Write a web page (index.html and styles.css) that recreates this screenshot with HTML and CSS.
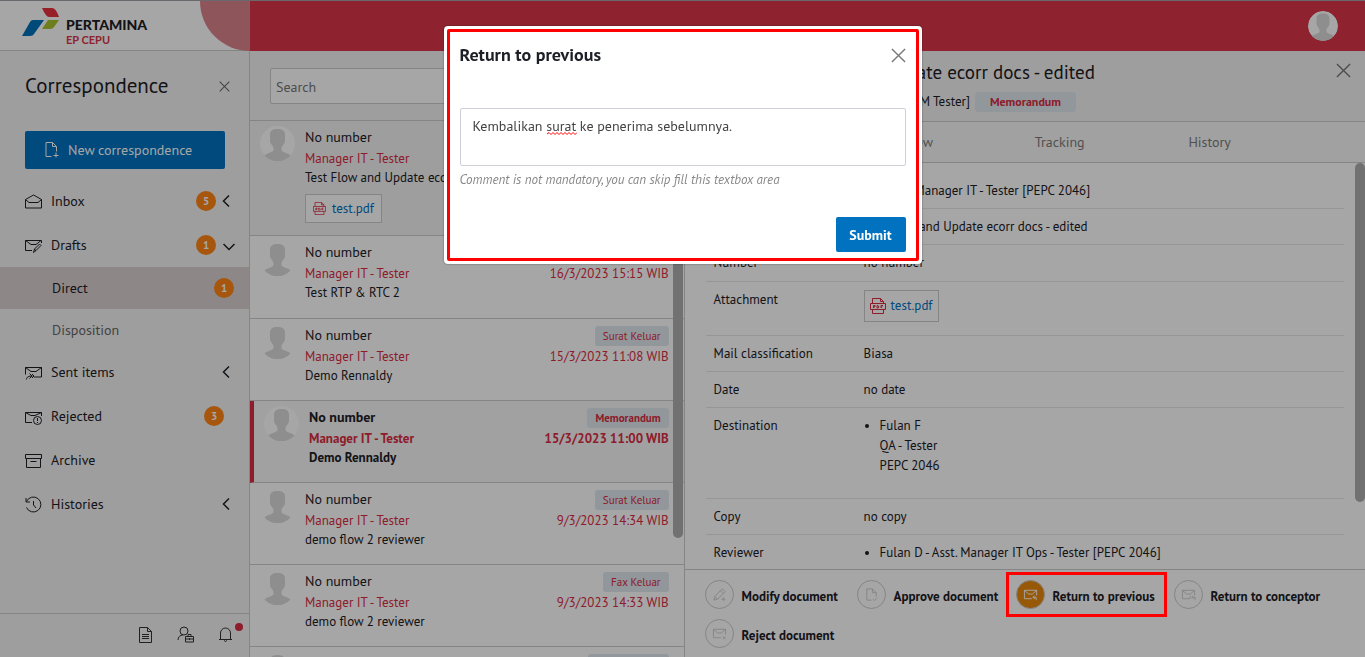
FILE: index.html
```html
<!DOCTYPE html>
<html lang="en">
<head>
<meta charset="utf-8">
<meta name="viewport" content="width=device-width, initial-scale=1">
<title>Correspondence</title>
<link rel="stylesheet" href="styles.css">
</head>
<body>
<svg class="sprite" aria-hidden="true">
  <symbol id="person" viewBox="0 0 35 35"><circle cx="17.500" cy="17.500" r="17.500" fill="#fff"/><path fill="#dadada" d="M17.500 3c5 0 7.500 2 7.500 5.500v6c0 3.500-2.500 4-3.500 7.500v2.500c2 2.500 7 2.500 9 5A17.500 17.500 0 0 1 4.500 29.500c2-2.500 7-2.500 9-5V22C12.500 18.500 10 18 10 14.500v-6C10 5 12.500 3 17.500 3z"/></symbol>
  <symbol id="close" viewBox="0 0 16 16"><path d="M1 1l14 14M15 1L1 15"/></symbol>
  <symbol id="left" viewBox="0 0 8 12"><path d="M7 .5L1.500 6 7 11.500"/></symbol>
  <symbol id="down" viewBox="0 0 12 8"><path d="M.5 1L6 6.500 11.500 1"/></symbol>
  <symbol id="inbox" viewBox="0 0 17 17"><path d="M.5 6.500L8.500 2l8 4.500v8.500H.5zM.5 6.500l3.500 3h9l3.500-3"/></symbol>
  <symbol id="drafts" viewBox="0 0 17 17"><path d="M16.500 6V3.500H.5v10H7M.5 3.500L6 7.500h5L16 3.500M8.500 15.500l1-3.500 5-5 1.500 1.500-5 5zM9.500 12l1.500 2"/></symbol>
  <symbol id="sent" viewBox="0 0 17 17"><path d="M.5 10.500v-7h16v9.500H9M.5 3.500L6 7.500h5L16.500 3.500M1.500 15.500c0-2.500 2-3.500 6-3.500M4.500 9.500L7 12l-2.500 2.500M7 10L9 12l-2 2"/></symbol>
  <symbol id="rejected" viewBox="0 0 17 17"><path d="M7 14.500H.5v-10h16V8M.5 4.500L6 7.500h4L16.500 4.500"/><circle cx="12.500" cy="12.500" r="4"/><path d="M12.500 10v3M12.500 14v1"/></symbol>
  <symbol id="archive" viewBox="0 0 17 17"><path d="M.5 2.500h16v4H.5zM1.500 6.500v9h14v-9M5.500 9.500h6"/></symbol>
  <symbol id="history" viewBox="0 0 17 17"><path d="M1.500 5.500a7.500 7.500 0 1 1 0 6M1 2v4h4M8.500 5v4l2.500 3"/></symbol>
  <symbol id="newdoc" viewBox="0 0 16 18"><path d="M8 15.500H2.500v-14H9l4 4v5M9 1.500v4h4M12.500 11.500v5M10 14.500h5"/></symbol>
  <symbol id="pdf" viewBox="0 0 16 16"><path d="M2.500 5V.5h8l3 3V5M10.500 .5v3h3M.5 5.500h15v6H.5zM2.500 11.500v4h11v-4M3.500 10V7.500h1.500v1.500H3.500M7 7.500v2.500h1l1-1-1-1.500zM11 10V7.500h2M11 9h1.500"/></symbol>
  <symbol id="mail" viewBox="0 0 16 14"><path d="M9.500 11.500H1.500v-9h13V8M1.500 2.500L6 6.500h4l4.500-4"/></symbol>
</svg>

<div class="app">
  <aside class="sidebar">
    <div class="brand">
      <svg class="brand-mark" viewBox="0 0 38 30" aria-hidden="true"><path fill="#e8313d" d="M20 1h10q4 0 7 9H27q-3 0-7-9z"/><path fill="#0072bc" d="M11 13h11L12 27q-1 2-4 2H0l8-14q1-2 3-2z"/><path fill="#a6c32b" d="M26 13h11l-5 7q-1 2-4 2h-8z"/></svg>
      <div class="brand-text"><strong>PERTAMINA</strong><span>EP CEPU</span></div>
      <span class="brand-arc"></span>
    </div>
    <div class="side-title"><h1>Correspondence</h1><button class="icon-button" aria-label="Close menu"><svg class="line x-small"><use href="#close"/></svg></button></div>
    <button class="new-button"><svg class="line new-icon"><use href="#newdoc"/></svg>New correspondence</button>
    <nav class="menu">
      <a href="#"><svg class="line"><use href="#inbox"/></svg><span class="name">Inbox</span><b class="count">5</b><svg class="line left"><use href="#left"/></svg></a>
      <a href="#"><svg class="line"><use href="#drafts"/></svg><span class="name">Drafts</span><b class="count">1</b><svg class="line down"><use href="#down"/></svg></a>
      <a href="#" class="sub current"><span class="name">Direct</span><b class="count">1</b></a>
      <a href="#" class="sub"><span class="name">Disposition</span></a>
      <a href="#"><svg class="line"><use href="#sent"/></svg><span class="name">Sent items</span><svg class="line left"><use href="#left"/></svg></a>
      <a href="#"><svg class="line"><use href="#rejected"/></svg><span class="name">Rejected</span><b class="count end">3</b></a>
      <a href="#"><svg class="line"><use href="#archive"/></svg><span class="name">Archive</span></a>
      <a href="#"><svg class="line"><use href="#history"/></svg><span class="name">Histories</span><svg class="line left"><use href="#left"/></svg></a>
    </nav>
    <div class="side-tools">
      <button class="icon-button" aria-label="Documents"><svg class="line" viewBox="0 0 17 17"><path d="M2.500 1.500h8l4 4v11h-12zM10.500 1.500v4h4M5 8.500h7M5 10.500h7M5 12.500h7"/></svg></button>
      <button class="icon-button" aria-label="Secretary"><svg class="line" viewBox="0 0 17 17"><circle cx="7" cy="5" r="4"/><path d="M1 14c0-3 2-5 5-5M8.500 10.500h8v5.500h-8zM8.500 13h8M11 10.500v-2h3v2M12.500 12v2"/></svg></button>
      <button class="icon-button bell" aria-label="Notifications"><svg class="line" viewBox="0 0 17 17"><path d="M3.500 13V7a5 5 0 0 1 10 0v6M2 13.500h13M7 14.500q1.500 2 3 0"/></svg><i class="dot"></i></button>
    </div>
  </aside>

  <div class="workspace">
    <header class="topbar"><button class="icon-button" aria-label="Account"><svg class="account"><use href="#person"/></svg></button></header>
    <div class="columns">
      <section class="inbox">
        <div class="search"><input type="search" placeholder="Search" aria-label="Search"></div>
        <div class="mails">
          <article class="mail open">
            <svg class="avatar"><use href="#person"/></svg>
            <div class="mail-text"><h2>No number</h2><p class="from">Manager IT - Tester</p><p>Test Flow and Update ecorr docs</p><a href="#" class="file"><svg class="line"><use href="#pdf"/></svg>test.pdf</a></div>
          </article>
          <article class="mail">
            <svg class="avatar"><use href="#person"/></svg>
            <div class="mail-text"><h2>No number</h2><p class="from">Manager IT - Tester</p><p>Test RTP &amp; RTC 2</p></div>
            <div class="mail-side"><span class="tag">Surat Keluar</span><time>16/3/2023 15:15 WIB</time></div>
          </article>
          <article class="mail">
            <svg class="avatar"><use href="#person"/></svg>
            <div class="mail-text"><h2>No number</h2><p class="from">Manager IT - Tester</p><p>Demo Rennaldy</p></div>
            <div class="mail-side"><span class="tag">Surat Keluar</span><time>15/3/2023 11:08 WIB</time></div>
          </article>
          <article class="mail selected">
            <svg class="avatar"><use href="#person"/></svg>
            <div class="mail-text"><h2>No number</h2><p class="from">Manager IT - Tester</p><p>Demo Rennaldy</p></div>
            <div class="mail-side"><span class="tag">Memorandum</span><time>15/3/2023 11:00 WIB</time></div>
          </article>
          <article class="mail">
            <svg class="avatar"><use href="#person"/></svg>
            <div class="mail-text"><h2>No number</h2><p class="from">Manager IT - Tester</p><p>demo flow 2 reviewer</p></div>
            <div class="mail-side"><span class="tag">Surat Keluar</span><time>9/3/2023 14:34 WIB</time></div>
          </article>
          <article class="mail">
            <svg class="avatar"><use href="#person"/></svg>
            <div class="mail-text"><h2>No number</h2><p class="from">Manager IT - Tester</p><p>demo flow 2 reviewer</p></div>
            <div class="mail-side"><span class="tag">Fax Keluar</span><time>9/3/2023 14:33 WIB</time></div>
          </article>
          <article class="mail">
            <svg class="avatar"><use href="#person"/></svg>
            <div class="mail-text"></div>
            <div class="mail-side"><span class="tag">Memorandum</span></div>
          </article>
          <span class="thumb"></span>
        </div>
      </section>

      <main class="detail">
        <div class="detail-head">
          <div><h2>Test Flow and Update ecorr docs - edited</h2>
          <p><span>Fulan F - Manager IT - Tester [PEPM Tester]</span><span class="tag wide">Memorandum</span></p></div>
          <button class="icon-button" aria-label="Close document"><svg class="line x-mid"><use href="#close"/></svg></button>
        </div>
        <nav class="tabs"><a href="#">Detail</a><a href="#">Preview</a><a href="#">Tracking</a><a href="#">History</a></nav>
        <div class="detail-body">
          <table class="facts">
            <tbody>
              <tr><th scope="row">From</th><td>Fulan F - Manager IT - Tester [PEPC 2046]</td></tr>
              <tr><th scope="row">Subject</th><td>Test Flow and Update ecorr docs - edited</td></tr>
              <tr class="number"><th scope="row">Number</th><td>no number</td></tr>
              <tr class="attachment"><th scope="row">Attachment</th><td><a href="#" class="file"><svg class="line"><use href="#pdf"/></svg>test.pdf</a></td></tr>
              <tr><th scope="row">Mail classification</th><td>Biasa</td></tr>
              <tr><th scope="row">Date</th><td>no date</td></tr>
              <tr class="destination"><th scope="row">Destination</th><td><ul><li>Fulan F<br>QA - Tester<br>PEPC 2046</li></ul></td></tr>
              <tr><th scope="row">Copy</th><td>no copy</td></tr>
              <tr><th scope="row">Reviewer</th><td><ul><li>Fulan D - Asst. Manager IT Ops - Tester [PEPC 2046]</li></ul></td></tr>
            </tbody>
          </table>
          <span class="thumb"></span>
        </div>
        <div class="actions">
          <button><span class="ring"><svg class="line" viewBox="0 0 16 16"><path d="M2 14l1-4 8-8 3 3-8 8zM3 10l3 3M9 4l3 3M10 13h4M12.500 11v4"/></svg></span><span class="label">Modify document</span></button>
          <button><span class="ring"><svg class="line" viewBox="0 0 16 16"><path d="M8 14H3V2h6l4 4v4M9 2v4h4M9.500 13l1.500 1.500 3-3"/></svg></span><span class="label">Approve document</span></button>
          <button class="active"><span class="ring"><svg class="line" viewBox="0 0 16 14"><use href="#mail" width="16" height="14"/><path d="M12.500 8.500l-2 1.500 2 1.500M10.500 10h3.500v3"/></svg></span><span class="label">Return to previous</span><i class="marker"></i></button>
          <button><span class="ring"><svg class="line" viewBox="0 0 16 14"><use href="#mail" width="16" height="14"/><path d="M10.500 8.500L9 10l1.500 1.500M13 8.500L11.500 10l1.500 1.500M12 10h3v3"/></svg></span><span class="label">Return to conceptor</span></button>
          <button><span class="ring"><svg class="line" viewBox="0 0 16 14"><use href="#mail" width="16" height="14"/><path d="M11.500 10l3 3M14.500 10l-3 3"/></svg></span><span class="label">Reject document</span></button>
        </div>
      </main>
    </div>
  </div>
</div>

<div class="backdrop">
  <form class="dialog" role="dialog" aria-labelledby="dialog-title">
    <div class="dialog-frame">
      <div class="dialog-head"><h2 id="dialog-title">Return to previous</h2><button type="button" class="icon-button" aria-label="Close dialog"><svg class="line x-mid"><use href="#close"/></svg></button></div>
      <div class="comment">
        <textarea aria-label="Comment" aria-describedby="hint" spellcheck="false">Kembalikan surat ke penerima sebelumnya.</textarea>
        <svg class="squiggle" viewBox="0 0 30 3" aria-hidden="true"><path d="M0 2l2-1.500 2 2 2-2 2 2 2-2 2 2 2-2 2 2 2-2 2 2 2-2 2 2 2-2 2 2 2-2"/></svg>
      </div>
      <p id="hint">Comment is not mandatory, you can skip fill this textbox area</p>
      <button type="submit" class="submit">Submit</button>
    </div>
  </form>
</div>
</body>
</html>
```
FILE: styles.css
```css
* { box-sizing: border-box; }
body { margin: 0; font: 13px/20px "PT Sans", Lato, "Noto Sans", sans-serif; color: #1c2026; background: #fff; overflow: hidden; }
h1, h2, p, ul { margin: 0; font-weight: inherit; }
ul { padding: 0 0 0 16px; }
a { color: inherit; text-decoration: none; }
button, input, textarea { font: inherit; color: inherit; }
button { border: 0; background: none; padding: 0; text-align: left; }
.sprite { position: absolute; width: 0; height: 0; }
.line { width: 17px; height: 17px; fill: none; stroke: currentColor; stroke-width: 1; flex: none; }
.icon-button { display: flex; color: #333; }

.app { display: flex; height: 100vh; border-top: 1px solid #a0a0a8; }

/* Sidebar */
.sidebar { width: 250px; flex: none; display: flex; flex-direction: column; background: #f3f3f3; border-right: 1px solid #ccc; }
.brand { position: relative; height: 50px; padding: 6px 0 0 22px; display: flex; gap: 6px; background: #fff; border-bottom: 1px solid #ccc; }
.brand-mark { width: 38px; height: 30px; }
.brand-text { display: flex; flex-direction: column; padding-top: 10px; font-family: Lato, sans-serif; }
.brand-text strong { font-size: 14px; line-height: 16px; font-weight: 900; }
.brand-text span { font-size: 11px; line-height: 14px; font-weight: 700; color: #da3749; }
.brand-arc { position: absolute; top: 0; right: -1px; width: 50px; height: 50px; background: #db848c; border-bottom-left-radius: 50px; }
.side-title { display: flex; align-items: center; justify-content: space-between; padding: 20px 19px 0 25px; }
.side-title h1 { font-size: 21px; line-height: 30px; }
.side-title .icon-button { color: #666; }
.x-small { width: 11px; height: 11px; stroke-width: 1.5; }
.new-button { display: flex; align-items: center; gap: 8px; height: 38px; margin: 30px 24px 0 25px; padding-left: 18px; background: #0072c0; color: #fff; border-radius: 2px; font-size: 14px; }
.new-icon { width: 17px; height: 18px; }
.menu { flex: 1; padding-top: 10px; font-size: 14px; min-height: 0; }
.menu a { display: flex; align-items: center; height: 44px; padding: 0 19px 0 25px; }
.menu .name { flex: 1; padding-left: 9px; }
.menu .sub { height: 41px; padding: 0 15px 0 43px; }
.menu .sub:not(.current) { color: #666; }
.menu .current { height: 42px; background: #dbd0d0; }
.count { display: grid; place-items: center; width: 20px; height: 20px; border-radius: 10px; background: #ff8414; color: #fff; font-size: 11px; }
.menu .end { margin-right: 6px; }
.menu .left { width: 8px; height: 12px; margin-left: 6px; stroke-width: 1.5; }
.menu .down { width: 12px; height: 8px; margin: 4px -5px 0 7px; stroke-width: 1.5; }
.side-tools { display: flex; align-items: center; justify-content: flex-end; gap: 23px; height: 44px; padding: 0 15px 2px 0; border-top: 1px solid #ccc; }
.bell { position: relative; }
.dot { position: absolute; right: -9px; top: -3px; width: 8px; height: 8px; border-radius: 50%; background: #da2c43; }

/* Top bar */
.workspace { flex: 1; min-width: 0; display: flex; flex-direction: column; }
.topbar { flex: none; display: flex; align-items: center; justify-content: flex-end; height: 50px; padding-right: 27px; background: #da3749; }
.account { width: 30px; height: 30px; border-radius: 50%; }
.columns { flex: 1; min-height: 0; display: flex; }

/* Mail list */
.inbox { flex: 434; min-width: 0; display: flex; flex-direction: column; border-right: 1px solid #ccc; }
.search { padding: 17px 20px 16px; background: #f3f3f3; border-bottom: 1px solid #ccc; }
.search input { display: block; width: 100%; height: 36px; padding: 2px 5px 0; border: 1px solid #ccc; border-radius: 2px; background: #fff; font-size: 14px; outline: 0; }
.search input::placeholder { color: #777; opacity: 1; }
.mails { position: relative; flex: 1; min-height: 0; overflow: hidden; }
.mail { display: flex; min-height: 82px; padding: 5px 15px 5px 10px; border-bottom: 1px solid #ccc; }
.mail.open { background: #f3f3f3; padding-bottom: 12px; }
.mail.open + .mail { min-height: 83px; }
.mail.selected { background: #f8f8f8; border-left: 4px solid #da2c43; font-weight: 700; }
.avatar { flex: none; width: 35px; height: 35px; margin-right: 10px; }
.mail-text { flex: 1; min-width: 0; }
.mail h2 { margin-bottom: 1px; font-size: 14px; line-height: 22px; }
.mail p { line-height: 18px; white-space: nowrap; }
.mail .from, .mail time { line-height: 20px; color: #da2c43; }
.mail-side { display: flex; flex-direction: column; align-items: flex-end; gap: 1px; padding-top: 2px; white-space: nowrap; }
.tag { padding: 0 8px; border-radius: 3px; background: #dfe8ee; color: #da2c43; font-size: 11px; line-height: 20px; }
.file { display: inline-flex; align-items: center; gap: 6px; height: 29px; padding: 0 7px; border: 1px solid #ccc; background: #fff; color: #0072c0; }
.file .line { width: 13px; height: 13px; color: #da2c43; }
.mail .file { margin-top: 7px; }
.thumb { position: absolute; width: 10px; background: #aeaeae; }
.mails .thumb { top: -20px; right: 1px; height: 437px; border-radius: 5px; }

/* Document */
.detail { flex: 681; min-width: 0; display: flex; flex-direction: column; }
.detail-head { display: flex; justify-content: space-between; align-items: flex-start; height: 71px; padding: 8px 14px 0 51px; background: #f3f3f3; border-bottom: 1px solid #ccc; }
.detail-head h2 { padding-left: 32px; font-size: 19px; line-height: 26px; }
.detail-head p { display: flex; align-items: center; gap: 5px; padding-top: 7px; }
.detail-head .icon-button { padding-top: 4px; color: #777; }
.tag.wide { padding: 0 15px; font-size: 12px; font-weight: 700; border-radius: 4px; }
.x-mid { width: 15px; height: 15px; stroke-width: 1.5; }
.tabs { display: flex; height: 41px; background: #f8f8f8; border-bottom: 1px solid #ccc; }
.tabs a { width: 150px; text-align: center; line-height: 40px; font-size: 14px; color: #7c7c7c; }
.detail-body { position: relative; flex: 1; min-height: 0; overflow: hidden; padding: 10px 21px 0; }
.detail-body .thumb { top: 0; right: 0; height: 339px; border-radius: 5px; }
.facts { width: 100%; border-collapse: separate; border-spacing: 0; }
.facts th, .facts td { height: 36px; padding: 8px 8px 7px; border-bottom: 1px solid #e6e6e6; text-align: left; vertical-align: top; font-weight: 400; }
.facts th { width: 150px; }
.facts .number > * { height: 37px; }
.facts .attachment > * { height: 54px; }
.facts .destination > * { height: 91px; }
.facts .file { height: 32px; padding: 0 5px; gap: 5px; }
.facts .file .line { width: 16px; height: 16px; }
.actions { flex: none; display: grid; grid-template-columns: 152px 159px 158px 1fr; gap: 9px 0; height: 88px; align-content: start; padding: 10px 0 0 20px; border-top: 1px solid #ccc; font-weight: 700; }
.actions button { position: relative; justify-self: start; display: flex; align-items: flex-start; gap: 8px; white-space: nowrap; height: 30px; }
.label { padding-top: 7px; }
.ring { display: grid; place-items: center; width: 29px; height: 29px; border: 1px solid #ccc; border-radius: 50%; color: #ccc; }
.ring .line { width: 15px; height: 15px; }
.active .ring { background: #e8890c; color: #fff; }
.marker { position: absolute; inset: -8px -12px -7px -10px; border: 3px solid #f00; z-index: 20; }

/* Dialog */
.backdrop { position: fixed; inset: 0; z-index: 10; padding-top: 26px; background: rgba(0, 0, 0, .35); }
.dialog { width: 478px; margin: 0 auto; padding: 3px; background: #fff; border-radius: 4px; box-shadow: 0 0 2px rgba(0, 0, 0, .5); }
.dialog-frame { display: flex; flex-direction: column; padding: 11px 10px 6px; border: 3px solid #f00; border-radius: 2px; }
.dialog-head { display: flex; align-items: center; justify-content: space-between; }
.dialog-head h2 { font-size: 18px; line-height: 24px; font-weight: 700; }
.dialog-head .icon-button { color: #777; }
.comment { position: relative; margin-top: 41px; }
.comment textarea { display: block; width: 100%; height: 58px; padding: 7px 12px; border: 1px solid #ced0d8; border-radius: 2px; background: #fff; font-size: 14px; line-height: 20px; color: #444; resize: none; outline: 0; }
.squiggle { position: absolute; left: 87px; top: 24px; width: 30px; height: 3px; fill: none; stroke: #f00; }
#hint { padding-top: 4px; font-style: italic; color: #888; }
.submit { align-self: flex-end; width: 70px; height: 35px; margin-top: 27px; background: #0072c0; color: #fff; border-radius: 2px; text-align: center; font-size: 14px; font-weight: 700; }
```
